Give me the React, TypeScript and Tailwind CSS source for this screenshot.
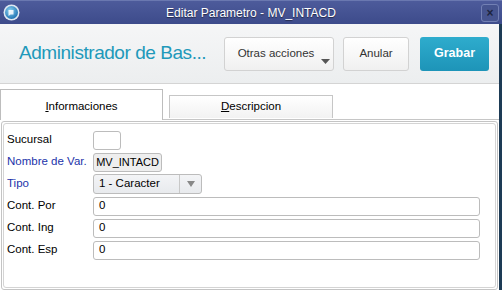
const font = { fontFamily: '"Liberation Sans", Arial, sans-serif' };

function Field({
  label,
  blue,
  children,
}: {
  label: string;
  blue?: boolean;
  children: React.ReactNode;
}) {
  return (
    <div className="flex h-[22px] items-center">
      <span
        className={`w-[86px] shrink-0 whitespace-nowrap text-[11.5px] ${blue ? "text-[#2233aa]" : "text-black"}`}
      >
        {label}
      </span>
      {children}
    </div>
  );
}

function TextBox({ value, w = "w-[387px]" }: { value: string; w?: string }) {
  return (
    <div
      className={`${w} flex h-[19px] shrink-0 items-center rounded-[3px] border border-[#bcbcbc] bg-white pl-[5px] text-[11.5px] text-black`}
    >
      {value}
    </div>
  );
}

export default function App() {
  return (
    <div className="flex h-[290px] w-[502px] flex-col overflow-hidden bg-white" style={font}>
      {/* title bar */}
      <div className="relative flex h-[24px] shrink-0 items-center justify-center border-t border-[#6a78b0] bg-gradient-to-b from-[#4d5b9b] to-[#3d4b8b]">
        <svg className="absolute left-[3px] top-[3px]" width="17" height="17" viewBox="0 0 17 17">
          <defs>
            <radialGradient id="g" cx="0.4" cy="0.35" r="0.7">
              <stop offset="0" stopColor="#8ad0f0" />
              <stop offset="1" stopColor="#1a6fb0" />
            </radialGradient>
          </defs>
          <circle cx="8.5" cy="8.5" r="8" fill="#dfe8f2" />
          <circle cx="8.5" cy="8.5" r="6.5" fill="url(#g)" />
          <path d="M5.5 6h5v4.5h-3l-2 1.5z" fill="#ffffff" opacity="0.85" />
        </svg>
        <span className="text-[12px] text-white [text-shadow:0_1px_1px_rgba(0,0,0,0.5)]">
          Editar Parametro - MV_INTACD
        </span>
        <div className="absolute right-[3px] top-[3px] flex h-[18px] w-[18px] items-center justify-center rounded-[3px] border border-[#7280b4] bg-[#46548f] text-[12px] font-bold leading-none text-[#1c2440]">
          ×
        </div>
      </div>

      <div className="flex flex-1 flex-col border-r-[3px] border-[#1d3b55]">
        {/* header */}
        <div className="flex h-[60px] shrink-0 items-center border-b border-[#d4d4d4] bg-gradient-to-b from-[#f5f6f7] to-[#eceeef] pl-[19px] pr-[10px]">
          <span className="whitespace-nowrap text-[19px] tracking-[-0.45px] text-[#2199ba]">
            Administrador de Bas...
          </span>
          <div className="ml-auto flex shrink-0 items-center">
            <div className="relative flex h-[34px] w-[110px] items-center justify-center rounded-[3px] border border-[#d2d2d2] bg-gradient-to-b from-white to-[#f0f0f0] pr-[6px] text-[11.5px] text-[#333]">
              Otras acciones
              <svg className="absolute right-[3px] bottom-[6px]" width="9" height="5" viewBox="0 0 9 5">
                <path d="M0 0h9L4.5 5z" fill="#555" />
              </svg>
            </div>
            <div className="ml-[9px] flex h-[34px] w-[66px] items-center justify-center rounded-[3px] border border-[#d2d2d2] bg-gradient-to-b from-white to-[#f0f0f0] text-[11.5px] text-[#333]">
              Anular
            </div>
            <div className="ml-[11px] flex h-[34px] w-[69px] items-center justify-center rounded-[3px] bg-gradient-to-b from-[#2eaccd] to-[#1d94b8] text-[12.5px] font-bold text-white">
              Grabar
            </div>
          </div>
        </div>

        {/* tabs */}
        <div className="flex h-[36px] shrink-0 items-end pt-[6px]">
          <div className="flex h-[31px] w-[163px] items-start justify-center border-l border-r border-t border-[#bdbdbd] bg-white pt-[8px] text-[11.5px] text-black">
            <span>
              <span className="underline">I</span>nformaciones
            </span>
          </div>
          <div className="flex h-[29px] flex-1 items-end border-b border-[#c6c6c6]">
            <div className="mb-[1px] ml-[6px] flex h-[23px] w-[164px] items-center justify-center border border-b-0 border-[#c6c6c6] bg-gradient-to-b from-white to-[#f2f2f2] text-[11.5px] text-black">
              <span>
                <span className="underline">D</span>escripcion
              </span>
            </div>
          </div>
        </div>

        {/* panel */}
        <div className="mx-[1px] mt-[1px] h-[169px] shrink-0 rounded-[3px] border border-[#c4c4c4] p-[1px]">
          <div className="flex h-full flex-col rounded-[3px] border border-[#d4d4d4] pl-[3px] pt-[5px]">
            <Field label="Sucursal">
              <TextBox value="" w="w-[28px]" />
            </Field>
            <Field label="Nombre de Var." blue>
              <div className="flex h-[19px] w-[69px] shrink-0 items-center justify-center rounded-[3px] border border-[#bcbcbc] bg-[#eeeeee] text-[11px] text-black">
                MV_INTACD
              </div>
            </Field>
            <Field label="Tipo" blue>
              <div className="flex h-[20px] w-[109px] shrink-0 items-center rounded-[3px] border border-[#bcbcbc] bg-gradient-to-b from-[#f3f4f6] to-[#e8eaed] text-[11.5px] text-black">
                <span className="flex-1 pl-[5px]">1 - Caracter</span>
                <div className="flex h-full w-[22px] items-center justify-center border-l border-[#c8c8c8]">
                  <svg width="8" height="6" viewBox="0 0 8 6">
                    <path d="M0 0h8L4 6z" fill="#888" />
                  </svg>
                </div>
              </div>
            </Field>
            <Field label="Cont. Por">
              <TextBox value="0" />
            </Field>
            <Field label="Cont. Ing">
              <TextBox value="0" />
            </Field>
            <Field label="Cont. Esp">
              <TextBox value="0" />
            </Field>
          </div>
        </div>
        <div className="mt-[1px] border-t border-[#d0d0d0]" />
      </div>
    </div>
  );
}
